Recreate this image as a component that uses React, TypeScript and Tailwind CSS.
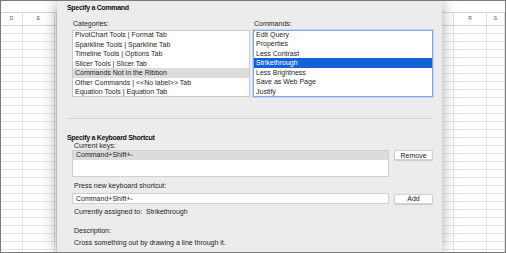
const font = { fontFamily: '"Liberation Sans", Arial, sans-serif' };

type Col = { label: string; width?: number };

const Sheet = ({ cols, className }: { cols: Col[]; className: string }) => {
  const rows = Array.from({ length: 29 });
  return (
    <div className={`relative overflow-hidden bg-white ${className}`}>
      <div className="h-[12px] border-b border-[#d4d4d4] bg-white" />
      <div className="flex h-[13px] border-b border-[#d4d4d4] bg-white">
        {cols.map((c, i) => (
          <div
            key={i}
            className={`flex items-center justify-center border-r border-[#dedede] text-[5px] text-[#555] ${c.width ? "shrink-0" : "flex-1"}`}
            style={c.width ? { width: c.width } : undefined}
          >
            {c.label}
          </div>
        ))}
      </div>
      {rows.map((_, r) => (
        <div key={r} className="flex h-[8px] border-b border-[#e4e4e4]">
          {cols.map((c, i) => (
            <div
              key={i}
              className={`border-r border-[#e2e2e2] ${c.width ? "shrink-0" : "flex-1"}`}
              style={c.width ? { width: c.width } : undefined}
            />
          ))}
        </div>
      ))}
    </div>
  );
};

const categories = [
  "PivotChart Tools | Format Tab",
  "Sparkline Tools | Sparkline Tab",
  "Timeline Tools | Options Tab",
  "Slicer Tools | Slicer Tab",
  "Commands Not in the Ribbon",
  "Other Commands | <<No label>> Tab",
  "Equation Tools | Equation Tab",
];

const commands = [
  "Edit Query",
  "Properties",
  "Less Contrast",
  "Strikethrough",
  "Less Brightness",
  "Save as Web Page",
  "Justify",
];

const Button = ({ children }: { children: string }) => (
  <button className="flex h-[10px] w-[39px] shrink-0 items-center justify-center rounded-[2px] border border-[#d2d2d2] bg-white text-[7px] leading-none text-[#222] shadow-[0_0.5px_1px_rgba(0,0,0,0.15)]">
    {children}
  </button>
);

export default function App() {
  return (
    <div
      className="relative flex h-[253px] w-[506px] overflow-hidden border border-[#7a7a7a] bg-white text-[#1e1e1e]"
      style={font}
    >
      <Sheet
        className="w-[56px] shrink-0"
        cols={[{ label: "D", width: 22 }, { label: "E", width: 32 }, { label: "" }]}
      />

      <div className="relative z-10 flex w-[385px] shrink-0 flex-col bg-[#ececec] pt-[2px] text-[7px] shadow-[0_0_14px_rgba(0,0,0,0.35)]">
        <div className="h-[10px] pl-[10px] text-[7px] font-bold leading-[10px] tracking-[-0.3px] text-[#111]">
          Specify a Command
        </div>

        <div className="mt-[6px] flex gap-[3px] pl-[15px] pr-[9px]">
          <div className="flex w-[178px] flex-col">
            <div className="h-[10px] pl-[1px] leading-[10px]">Categories:</div>
            <div className="mt-[1px] h-[67px] overflow-hidden border border-[#c9c9c9] bg-white">
              <div className="-mt-[1px]">
                {categories.map((c) => (
                  <div
                    key={c}
                    className={`h-[9.5px] whitespace-nowrap pl-[2px] leading-[9.5px] ${c === "Commands Not in the Ribbon" ? "bg-[#dcdcdc]" : ""}`}
                  >
                    {c}
                  </div>
                ))}
              </div>
            </div>
          </div>
          <div className="flex flex-1 flex-col">
            <div className="h-[10px] pl-[1px] leading-[10px]">Commands:</div>
            <div className="mt-[1px] h-[67px] overflow-hidden border border-[#7ea8e2] bg-white shadow-[0_0_0_1px_#c3d7f2]">
              <div className="-mt-[1.5px]">
                {commands.map((c) => (
                  <div
                    key={c}
                    className={`h-[9.5px] whitespace-nowrap pl-[2px] leading-[9.5px] ${c === "Strikethrough" ? "bg-[#1562d6] text-white" : ""}`}
                  >
                    {c}
                  </div>
                ))}
              </div>
            </div>
          </div>
        </div>

        <div className="mx-[9px] mt-[21px] h-px bg-[#d6d6d6]" />

        <div className="mt-[15px] h-[8px] pl-[10px] font-bold leading-[8px] tracking-[-0.3px] text-[#111]">
          Specify a Keyboard Shortcut
        </div>

        <div className="flex flex-col pl-[15px] pr-[9px]">
          <div className="h-[8px] pl-[2px] leading-[8px]">Current keys:</div>
          <div className="flex gap-[5px]">
            <div className="h-[27px] flex-1 border border-[#cfcfcf] bg-white">
              <div className="h-[8.5px] bg-[#dcdcdc] pl-[3px] leading-[8.5px]">Command+Shift+-</div>
            </div>
            <Button>Remove</Button>
          </div>

          <div className="mt-[5px] h-[8px] pl-[2px] leading-[8px]">Press new keyboard shortcut:</div>
          <div className="mt-[3px] flex items-center gap-[5px]">
            <div className="h-[11px] flex-1 border border-[#d0d0d0] bg-white pl-[3px] leading-[9px]">
              Command+Shift+-
            </div>
            <Button>Add</Button>
          </div>

          <div className="mt-[4px] h-[8px] pl-[2px] leading-[8px]">
            Currently assigned to:&nbsp;&nbsp;Strikethrough
          </div>
          <div className="mt-[11px] h-[8px] pl-[2px] leading-[8px]">Description:</div>
          <div className="mt-[4px] h-[8px] pl-[2px] leading-[8px]">
            Cross something out by drawing a line through it.
          </div>
        </div>
      </div>

      <Sheet
        className="flex-1"
        cols={[{ label: "", width: 12 }, { label: "R", width: 33 }, { label: "S" }]}
      />
    </div>
  );
}
